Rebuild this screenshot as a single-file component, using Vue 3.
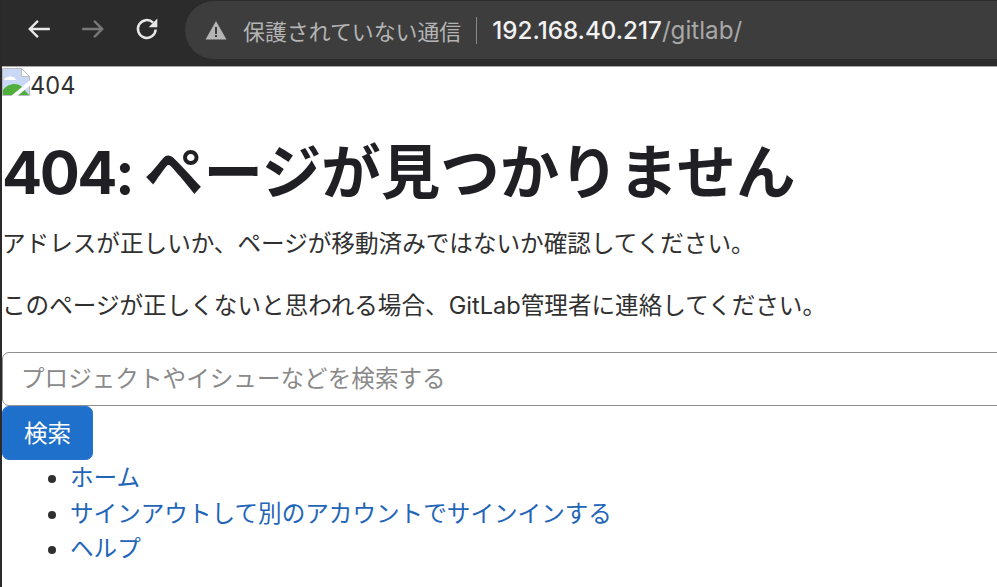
<script setup>
const links = ["ホーム", "サインアウトして別のアカウントでサインインする", "ヘルプ"];
</script>

<template>
  <div class="window">
    <header class="toolbar">
      <div class="nav">
        <svg class="nav-icon" viewBox="0 0 24 24" width="26" height="26">
          <path d="M22 12H3.500M11 4.500 3.500 12l7.500 7.500" fill="none" stroke="#e8e8e8" stroke-width="2.200" />
        </svg>
        <svg class="nav-icon" viewBox="0 0 24 24" width="26" height="26">
          <path d="M2 12h18.500M13 4.500l7.500 7.500-7.500 7.500" fill="none" stroke="#787878" stroke-width="2.200" />
        </svg>
        <svg class="nav-icon" viewBox="0 0 24 24" width="26" height="26">
          <path d="M20 12.500a8.200 8.200 0 1 1-2.400-6.300" fill="none" stroke="#e8e8e8" stroke-width="2.300" />
          <path d="M21.500 2.300v8h-8z" fill="#e8e8e8" />
        </svg>
      </div>
      <div class="omnibox">
        <svg class="warn" viewBox="0 0 22 20" width="22" height="20">
          <path d="M11 1 21.500 19.500H.5z" fill="#b4b4b4" />
          <path d="M10 7h2v7h-2zM10 15h2v2h-2z" fill="#3c3c3c" />
        </svg>
        <span class="security">保護されていない通信</span>
        <span class="sep"></span>
        <span class="url"><b>192.168.40.217</b>/gitlab/</span>
      </div>
    </header>
    <main class="page">
      <div class="logo">
        <svg class="broken" viewBox="0 0 28 28" width="28" height="28">
          <path d="M.5.500h19l8 8v19H.5z" fill="#c9d9f5" stroke="#b9bcc2" />
          <path d="M19.500.500v8h8z" fill="#fff" stroke="#b9bcc2" />
          <path d="M2 12c1-4 10-5 12 0z" fill="#fff" />
          <path d="M1 27v-5c4-6 13-8 18-4l8 9z" fill="#4fae3c" />
          <path d="M11 29 29 14" stroke="#fff" stroke-width="4" />
        </svg><span>404</span>
      </div>
      <h1><span class="code">404: </span>ページが見つかりません</h1>
      <p>アドレスが正しいか、ページが移動済みではないか確認してください。</p>
      <p>このページが正しくないと思われる場合、GitLab管理者に連絡してください。</p>
      <form class="search" @submit.prevent>
        <input type="text" placeholder="プロジェクトやイシューなどを検索する" />
        <button type="submit">検索</button>
      </form>
      <ul>
        <li v-for="link in links" :key="link"><a href="#">{{ link }}</a></li>
      </ul>
    </main>
  </div>
</template>

<style scoped>
.window {
  height: 587px;
  overflow: hidden;
  border-left: 2px solid #2a2a2a;
  background: #fff;
  color: #303030;
  font-family: Inter, "Noto Sans CJK JP", sans-serif;
}
.toolbar {
  height: 67px;
  box-sizing: border-box;
  display: flex;
  align-items: flex-start;
  padding-top: 1px;
  background: #2b2b2b;
  border-bottom: 1px solid #a8a8a8;
}
.nav {
  width: 183px;
  display: flex;
  gap: 28px;
  padding: 15px 0 0 24px;
  box-sizing: border-box;
}
.omnibox {
  flex: 1;
  height: 58px;
  display: flex;
  align-items: center;
  padding-left: 20px;
  border-radius: 29px 0 0 29px;
  background: #3d3d3d;
}
.warn {
  margin-right: 16px;
}
.security {
  font-size: 21.900px;
  color: #b4b4b4;
}
.sep {
  width: 1px;
  height: 27px;
  margin: 0 15px;
  background: #8a8a8a;
}
.url {
  font-size: 24.200px;
  color: #a8a8a8;
}
.url b {
  font-weight: 500;
  color: #f2f2f2;
}
.page {
  font-size: 23.600px;
}
.logo {
  display: flex;
  align-items: flex-start;
  height: 33px;
  line-height: 28px;
}
.broken {
  margin-top: 1px;
}
.logo span {
  margin-top: 5px;
}
h1 {
  margin: 38px 0 0;
  font-size: 59.500px;
  line-height: 68px;
  font-weight: 700;
  color: #1f1f24;
}
.code {
  letter-spacing: -2.500px;
}
p {
  margin: 0;
  line-height: 34px;
  margin-top: 28px;
}
h1 + p {
  margin-top: 21px;
}
.search {
  margin-top: 29px;
}
input {
  display: block;
  width: 1040px;
  height: 54px;
  box-sizing: border-box;
  padding: 0 18px 2px;
  border: 1.500px solid #8f8f8f;
  border-radius: 7px;
  font: inherit;
  outline: none;
}
input::placeholder {
  color: #8a8a8a;
}
button {
  display: block;
  width: 91px;
  height: 54px;
  margin-top: 0;
  padding: 0 0 2px;
  border: 1px solid #2a74d0;
  border-radius: 7px;
  background: #1f70ca;
  color: #fff;
  font: inherit;
}
ul {
  margin: 0;
  padding-left: 68px;
  line-height: 35.500px;
}
li::marker {
  color: #303030;
}
a {
  color: #1f66b8;
  text-decoration: none;
}
</style>

<style>
body {
  background: #fff;
}
</style>
